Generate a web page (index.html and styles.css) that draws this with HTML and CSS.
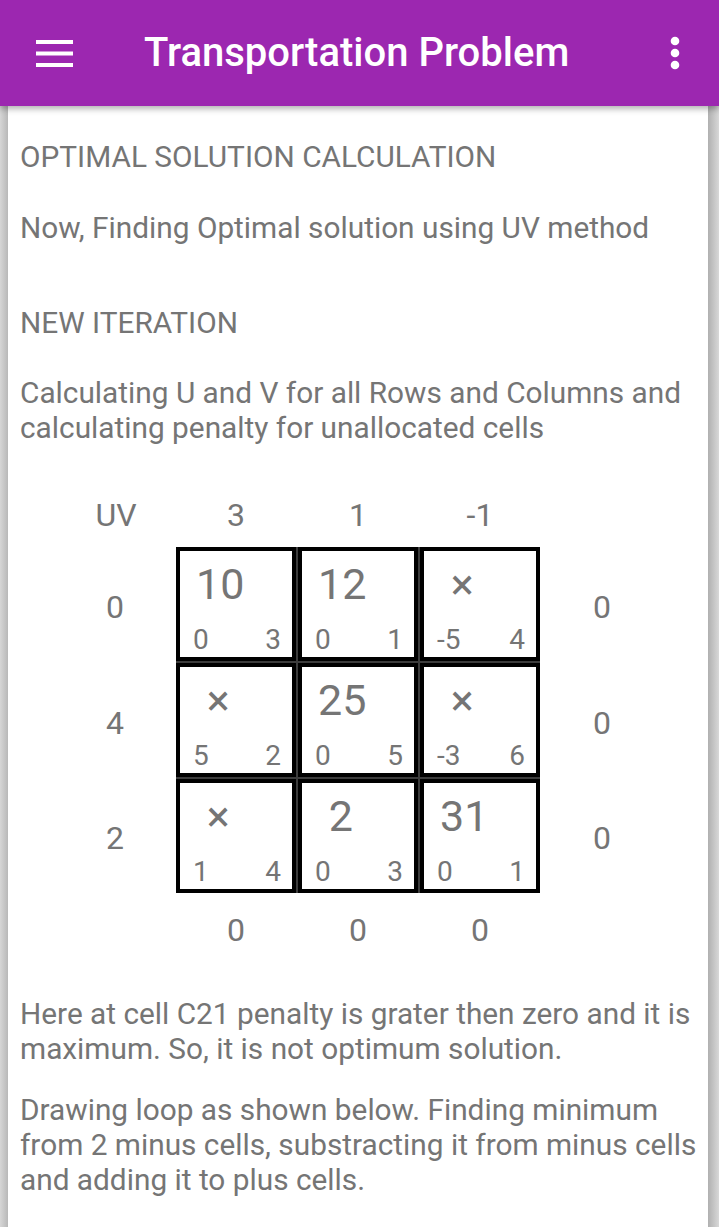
FILE: index.html
```html
<!DOCTYPE html>
<html>
<head>
<meta charset="utf-8">
<link rel="stylesheet" href="styles.css">
</head>
<body>
<header class="appbar">
  <svg class="menu-icon" width="37" height="27" viewBox="0 0 37 27"><rect x="0" y="0" width="37" height="4" fill="#fff"/><rect x="0" y="11.5" width="37" height="4" fill="#fff"/><rect x="0" y="23" width="37" height="4" fill="#fff"/></svg>
  <h1 class="title">Transportation Problem</h1>
  <svg class="more-icon" width="10" height="34" viewBox="0 0 10 34"><circle cx="5" cy="5" r="4.3" fill="#fff"/><circle cx="5" cy="17" r="4.3" fill="#fff"/><circle cx="5" cy="29" r="4.3" fill="#fff"/></svg>
</header>
<main class="card">
  <p class="txt p-head">OPTIMAL SOLUTION CALCULATION</p>
  <p class="txt p-now">Now, Finding Optimal solution using UV method</p>
  <p class="txt p-iter">NEW ITERATION</p>
  <p class="txt p-calc">Calculating U and V for all Rows and Columns and calculating penalty for unallocated cells</p>

  <div class="uv-grid">
    <div class="lbl corner">UV</div>
    <div class="vrow v-top">
      <div class="lbl">3</div>
      <div class="lbl">1</div>
      <div class="lbl">-1</div>
    </div>

    <div class="lbl side r1">0</div>
    <div class="matrix">
      <div class="cell"><div class="big">10</div><div class="small"><span>0</span><span>3</span></div></div>
      <div class="cell"><div class="big">12</div><div class="small"><span>0</span><span>1</span></div></div>
      <div class="cell"><div class="big">&nbsp;×</div><div class="small"><span>-5</span><span>4</span></div></div>
      <div class="cell"><div class="big">&nbsp;×</div><div class="small"><span>5</span><span>2</span></div></div>
      <div class="cell"><div class="big">25</div><div class="small"><span>0</span><span>5</span></div></div>
      <div class="cell"><div class="big">&nbsp;×</div><div class="small"><span>-3</span><span>6</span></div></div>
      <div class="cell"><div class="big">&nbsp;×</div><div class="small"><span>1</span><span>4</span></div></div>
      <div class="cell"><div class="big">&nbsp;2</div><div class="small"><span>0</span><span>3</span></div></div>
      <div class="cell"><div class="big">31</div><div class="small"><span>0</span><span>1</span></div></div>
    </div>
    <div class="lbl side r1 right">0</div>

    <div class="lbl side r2">4</div>
    <div class="lbl side r2 right">0</div>

    <div class="lbl side r3">2</div>
    <div class="lbl side r3 right">0</div>

    <div class="vrow v-bottom">
      <div class="lbl">0</div>
      <div class="lbl">0</div>
      <div class="lbl">0</div>
    </div>
  </div>

  <p class="txt p-here">Here at cell C21 penalty is grater then zero and it is maximum. So, it is not optimum solution.</p>
  <p class="txt p-draw">Drawing loop as shown below. Finding minimum from 2 minus cells, substracting it from minus cells and adding it to plus cells.</p>
</main>
</body>
</html>
```
FILE: styles.css
```css
html, body {
  margin: 0;
  padding: 0;
}
body {
  width: 719px;
  height: 1227px;
  overflow: hidden;
  background: linear-gradient(to right, #d6d6d6 0px, #b8b8b8 8px, #ffffff 8px, #ffffff 708px, #b0b0b0 708px, #d8d8d8 719px);
  font-family: Roboto, "Noto Sans", sans-serif;
}
.appbar {
  position: relative;
  z-index: 2;
  height: 106px;
  background: #9c27b0;
  display: flex;
  align-items: center;
  box-shadow: 0 3px 6px rgba(0, 0, 0, 0.3);
}
.menu-icon {
  margin-left: 36px;
  flex: none;
}
.title {
  margin: 0 0 0 71px;
  font-size: 40px;
  font-weight: 500;
  color: #ffffff;
  flex: 1;
  line-height: 46px;
}
.more-icon {
  margin-right: 39px;
  flex: none;
}
.card {
  margin: 0 11px 0 8px;
  padding: 0 0 0 12px;
  background: #ffffff;
  height: 1121px;
  overflow: hidden;
}
.txt {
  margin: 0;
  font-size: 29.8px;
  line-height: 35px;
  color: #757575;
}
.p-head { padding-top: 33px; }
.p-now { margin-top: 36px; }
.p-iter { margin-top: 60px; }
.p-calc { margin-top: 35px; }
.p-here { margin-top: 48px; }
.p-draw { margin-top: 26px; }

.uv-grid {
  margin-top: 52px;
  margin-left: 34px;
  display: grid;
  grid-template-columns: 122px 364px 124px;
  grid-template-rows: 50px 116px 116px 114px auto;
}
.lbl {
  font-size: 32px;
  color: #757575;
  text-align: center;
  line-height: 36px;
}
.corner {
  grid-column: 1;
  grid-row: 1;
  margin-left: 2px;
}
.vrow {
  grid-column: 2;
  display: grid;
  grid-template-columns: repeat(3, 120px);
  column-gap: 2px;
}
.v-top { grid-row: 1; }
.v-bottom {
  grid-row: 5;
  padding-top: 19px;
}
.lbl.side {
  align-self: center;
  grid-column: 1;
  padding-top: 3px;
}
.lbl.side.right { grid-column: 3; }
.lbl.r1 { grid-row: 2; }
.lbl.r2 { grid-row: 3; }
.lbl.r3 { grid-row: 4; }
.matrix {
  grid-column: 2;
  grid-row: 2 / 5;
  display: grid;
  grid-template-columns: repeat(3, 120px);
  grid-template-rows: repeat(3, 114px);
  gap: 2px;
  background: #3c3c3c;
  align-self: start;
}
.cell {
  border: 4px solid #000;
  background: #ffffff;
  display: flex;
  flex-direction: column;
  justify-content: space-between;
  color: #757575;
}
.big {
  font-size: 43px;
  line-height: 42px;
  padding: 12px 0 0 16px;
}
.small {
  display: flex;
  justify-content: space-between;
  font-size: 28px;
  line-height: 28px;
  padding: 0 11px 3px 13px;
}
```
